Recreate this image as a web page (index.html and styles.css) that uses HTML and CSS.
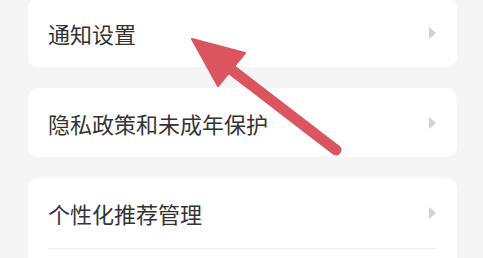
FILE: index.html
```html
<!DOCTYPE html>
<html lang="zh-CN">
<head>
<meta charset="utf-8">
<link rel="stylesheet" href="styles.css">
</head>
<body>
<div class="page">
  <div class="card first">
    <div class="row"><span class="label">通知设置</span><span class="chev"></span></div>
  </div>
  <div class="card">
    <div class="row"><span class="label">隐私政策和未成年保护</span><span class="chev"></span></div>
  </div>
  <div class="card">
    <div class="row divided"><span class="label">个性化推荐管理</span><span class="chev"></span></div>
    <div class="row"><span class="label"></span></div>
  </div>
</div>
<svg class="arrow" width="483" height="258" viewBox="0 0 483 258">
  <line x1="228" y1="67" x2="336" y2="150" stroke="#da5560" stroke-width="11" stroke-linecap="round"/>
  <polygon points="192,39 245,53 218,86" fill="#da5560" stroke="#da5560" stroke-width="2" stroke-linejoin="round"/>
</svg>
</body>
</html>
```

FILE: styles.css
```css
html, body {
  margin: 0;
  padding: 0;
  background: #f5f5f5;
  overflow: hidden;
}
body {
  width: 483px;
  height: 258px;
  position: relative;
  font-family: "Noto Sans CJK SC", "Noto Sans", sans-serif;
}
.page {
  height: 258px;
  overflow: hidden;
  padding: 0 26px 0 28px;
  display: flex;
  flex-direction: column;
  gap: 21px;
}
.card {
  flex: none;
  background: #fff;
  border-radius: 10px;
  padding: 0 21px 0 20px;
}
.card.first {
  margin-top: -2px;
}
.row {
  height: 69px;
  display: flex;
  align-items: center;
  justify-content: space-between;
}
.row.divided {
  height: 70px;
  border-bottom: 1px solid #efefef;
}
.label {
  font-size: 22px;
  color: #333;
  line-height: 1;
}
.chev {
  width: 0;
  height: 0;
  border-top: 6px solid transparent;
  border-bottom: 6px solid transparent;
  border-left: 7px solid #d2d2d2;
}
.arrow {
  position: absolute;
  left: 0;
  top: 0;
}
```
